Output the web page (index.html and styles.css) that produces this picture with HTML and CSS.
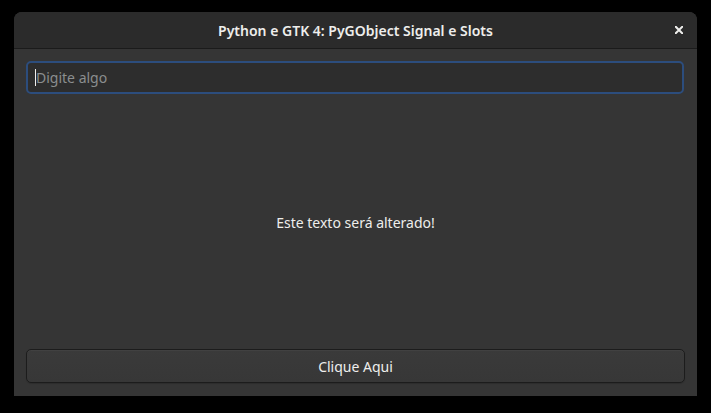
FILE: index.html
```html
<!DOCTYPE html>
<html>
<head>
<meta charset="utf-8">
<link rel="stylesheet" href="styles.css">
</head>
<body>
<div class="window">
  <header class="headerbar">
    <span class="title">Python e GTK 4: PyGObject Signal e Slots</span>
    <span class="close" aria-label="Fechar">
      <svg width="8" height="8" viewBox="0 0 8 8"><path d="M0.8 0.8 L7.2 7.2 M7.2 0.8 L0.8 7.2" stroke="#eeeeec" stroke-width="2" stroke-linecap="square"/></svg>
    </span>
  </header>
  <main class="content">
    <div class="entry"><span class="cursor"></span><span class="placeholder">Digite algo</span></div>
    <div class="label">Este texto será alterado!</div>
    <button class="button">Clique Aqui</button>
  </main>
</div>
</body>
</html>
```
FILE: styles.css
```css
html, body {
  margin: 0;
  padding: 0;
  background: #000000;
  width: 711px;
  height: 413px;
  overflow: hidden;
}
body {
  font-family: "Noto Sans", "Open Sans", sans-serif;
  color: #eeeeec;
}
.window {
  margin: 12px 0 0 14px;
  width: 683px;
  height: 384px;
  background: #353535;
  border-radius: 8px 8px 0 0;
  display: flex;
  flex-direction: column;
  overflow: hidden;
}
.headerbar {
  height: 36px;
  flex: none;
  background: #2b2b2b;
  border-bottom: 1px solid #1b1b1b;
  display: flex;
  align-items: center;
  justify-content: center;
  position: relative;
}
.title {
  font-weight: 600;
  font-size: 14px;
  color: #eeeeec;
}
.close {
  position: absolute;
  right: 14px;
  top: 14px;
  width: 8px;
  height: 8px;
  display: flex;
}
.content {
  flex: 1;
  display: flex;
  flex-direction: column;
  padding: 12px 12px 12px 12px;
}
.entry {
  height: 29px;
  border: 2px solid #2c4d7d;
  border-radius: 5px;
  background: #2d2d2d;
  display: flex;
  align-items: center;
  padding-left: 7px;
  margin-right: 1px;
}
.cursor {
  width: 1px;
  height: 17px;
  background: #eeeeec;
}
.placeholder {
  font-size: 14px;
  color: #8b8e8f;
}
.label {
  flex: 1;
  display: flex;
  align-items: center;
  justify-content: center;
  font-size: 14px;
  color: #eeeeec;
  padding-top: 2px;
}
.button {
  height: 34px;
  border: 1px solid #1c1c1c;
  border-radius: 5px;
  background: linear-gradient(#3a3a3a, #373737);
  box-shadow: inset 0 1px #414141, 0 1px 1px rgba(0,0,0,0.15);
  font-family: "Noto Sans", "Open Sans", sans-serif;
  font-size: 14px;
  color: #eeeeec;
  padding: 0;
  margin-bottom: 1px;
}
```
